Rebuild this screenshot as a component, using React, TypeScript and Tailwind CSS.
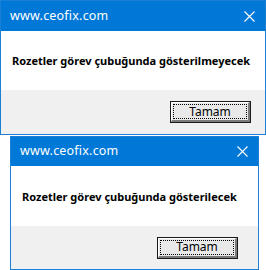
import React from "react";

interface DialogProps {
  message: string;
  className: string;
  titleH: string;
  bodyH: string;
  footH: string;
  bodyPad: string;
  titlePad: string;
  btnPad: string;
}

const CloseIcon = () => (
  <svg width="11" height="11" viewBox="0 0 11 11" className="block">
    <path d="M0.5 0.5 L10.5 10.5 M10.5 0.5 L0.5 10.5" stroke="#ffffff" strokeWidth="1.1" fill="none" />
  </svg>
);

const OkButton = () => (
  <div className="w-[81px] h-[22px] border border-[#1a1a1a] bg-[#e9e9e9]">
    <div className="h-full border-t border-l border-t-white border-l-white border-r-2 border-b-2 border-r-[#7c7c7c] border-b-[#7c7c7c] p-[1px]">
      <div className="h-full border border-dotted border-black flex items-center justify-center text-[12px] leading-none text-black">
        Tamam
      </div>
    </div>
  </div>
);

const Dialog = ({ message, className, titleH, bodyH, footH, bodyPad, titlePad, btnPad }: DialogProps) => (
  <div className={`border border-[#1b7fd4] bg-white flex flex-col ${className}`}>
    <div className={`bg-[#0078d7] flex items-center justify-between ${titleH} ${titlePad}`}>
      <span className="text-white text-[12.5px] tracking-[0.2px]">www.ceofix.com</span>
      <CloseIcon />
    </div>
    <div className={`bg-white flex items-center ${bodyH} ${bodyPad}`}>
      <span className="font-bold text-[11px] text-black pt-[2px]">{message}</span>
    </div>
    <div className={`bg-[#f0f0f0] flex items-center justify-end ${footH} ${btnPad}`}>
      <OkButton />
    </div>
  </div>
);

export default function App() {
  return (
    <div className="w-[266px] h-[270px] bg-white overflow-hidden" style={{ fontFamily: '"Noto Sans", "Open Sans", sans-serif' }}>
      <Dialog
        message="Rozetler görev çubuğunda gösterilmeyecek"
        className="w-[266px] h-[135px]"
        titleH="h-[30px]"
        bodyH="h-[59px]"
        footH="flex-1"
        bodyPad="pl-[11px]"
        titlePad="pl-[9px] pr-[10px]"
        btnPad="pr-[14px]"
      />
      <Dialog
        message="Rozetler görev çubuğunda gösterilecek"
        className="w-[249px] h-[134px] mt-[1px] ml-[10px]"
        titleH="h-[29px]"
        bodyH="h-[60px]"
        footH="flex-1"
        bodyPad="pl-[11px]"
        titlePad="pl-[9px] pr-[10px]"
        btnPad="pr-[20px]"
      />
    </div>
  );
}
